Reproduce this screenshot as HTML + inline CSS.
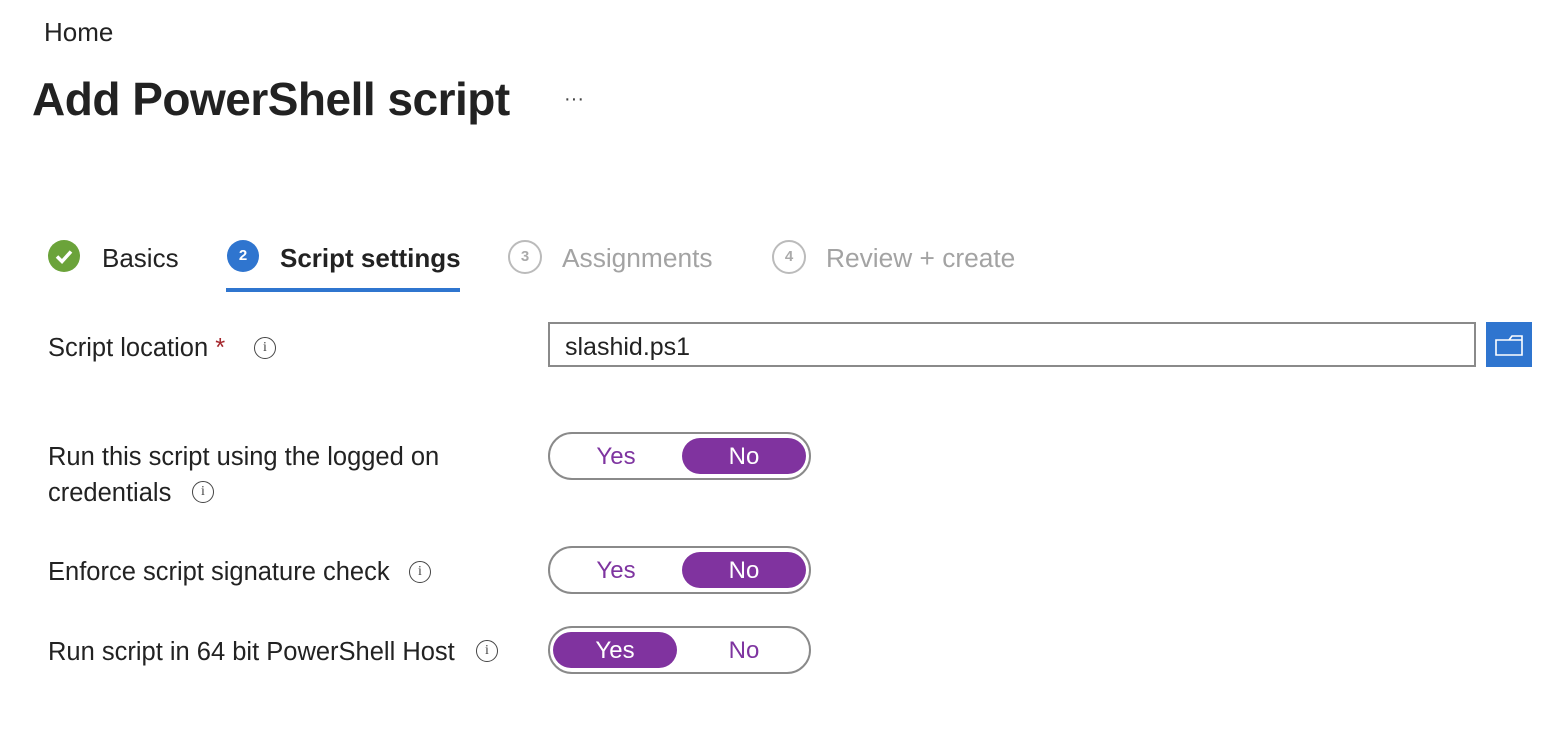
<!DOCTYPE html>
<html><head><style>
body{margin:0;width:1568px;height:742px;background:#fff;font-family:"Liberation Sans",sans-serif;color:#222;position:relative;overflow:hidden}
.a{position:absolute;white-space:nowrap}
.tg{position:absolute;left:548px;width:259px;height:44px;border:2px solid #8a8a8a;border-radius:24px}
.tg span{position:absolute;top:4px;width:124px;height:36px;line-height:38px;text-align:center;font-size:24px;color:#7e34a0;border-radius:18px}
.tg .on{background:#80339f;color:#fff}
.info{position:absolute;width:20px;height:20px;border:1.5px solid #444;border-radius:50%;font-size:14px;line-height:20px;text-align:center;color:#444;font-family:"Liberation Serif",serif}
.lbl{font-size:25.5px;color:#222}
.step{position:absolute;top:240px;width:32px;height:32px;border-radius:50%;font-size:15px;font-weight:bold;line-height:32px;text-align:center}
</style></head><body>
<div class="a" style="left:44px;top:17px;font-size:26px">Home</div>
<div class="a" style="left:32px;top:72px;font-size:46px;font-weight:bold;letter-spacing:-0.5px">Add PowerShell script</div>
<div class="a" style="left:564px;top:88px;font-size:20px;color:#444">···</div>

<div class="step" style="left:48px;background:#6ba33a"><svg width="32" height="32" viewBox="0 0 32 32"><path d="M9 16.5l5 5 9-10" stroke="#fff" stroke-width="3.5" fill="none"/></svg></div>
<div class="a" style="left:102px;top:243px;font-size:26px">Basics</div>
<div class="step" style="left:227px;background:#2f75cf;color:#fff">2</div>
<div class="a" style="left:280px;top:243px;font-size:26px;font-weight:bold">Script settings</div>
<div class="a" style="left:226px;top:288px;width:234px;height:4px;background:#2f75cf"></div>
<div class="step" style="left:508px;border:2px solid #bbb;width:30px;height:30px;line-height:30px;color:#aaa">3</div>
<div class="a" style="left:562px;top:243px;font-size:26.3px;color:#a3a3a3">Assignments</div>
<div class="step" style="left:772px;border:2px solid #bbb;width:30px;height:30px;line-height:30px;color:#aaa">4</div>
<div class="a" style="left:826px;top:243px;font-size:26.3px;color:#a3a3a3">Review + create</div>

<div class="a lbl" style="left:48px;top:334px">Script location <span style="color:#a4262c">*</span></div>
<div class="info" style="left:254px;top:337px">i</div>
<div class="a" style="left:548px;top:322px;width:924px;height:41px;border:2px solid #8a8a8a"></div>
<div class="a" style="left:565px;top:333px;font-size:25px">slashid.ps1</div>
<div class="a" style="left:1486px;top:322px;width:46px;height:45px;background:#2f75cf"><svg width="46" height="45" viewBox="0 0 46 45"><path d="M10 18h13l3-4h10v19H10z M26 14l-3 4h13" stroke="#fff" stroke-width="1.6" fill="none"/></svg></div>

<div class="a lbl" style="left:48px;top:443px">Run this script using the logged on</div>
<div class="a lbl" style="left:48px;top:479px">credentials</div>
<div class="info" style="left:192px;top:481px">i</div>
<div class="tg" style="top:432px"><span style="left:4px">Yes</span><span class="on" style="left:132px">No</span></div>

<div class="a lbl" style="left:48px;top:558px">Enforce script signature check</div>
<div class="info" style="left:409px;top:561px">i</div>
<div class="tg" style="top:546px"><span style="left:4px">Yes</span><span class="on" style="left:132px">No</span></div>

<div class="a lbl" style="left:48px;top:638px">Run script in 64 bit PowerShell Host</div>
<div class="info" style="left:476px;top:640px">i</div>
<div class="tg" style="top:626px"><span class="on" style="left:3px">Yes</span><span style="left:132px">No</span></div>
</body></html>
